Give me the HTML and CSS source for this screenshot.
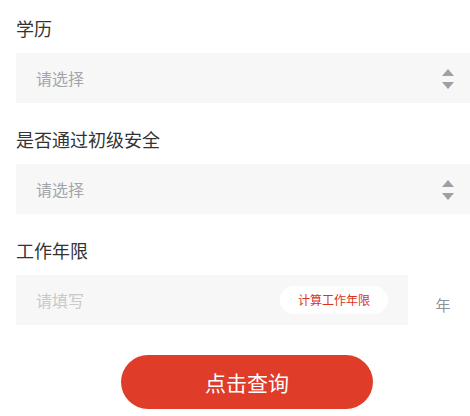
FILE: index.html
```html
<!DOCTYPE html>
<html lang="zh-CN">
<head>
<meta charset="utf-8">
<title>查询</title>
<link rel="stylesheet" href="styles.css">
</head>
<body>
<div class="page">
  <div class="field">
    <div class="label">学历</div>
    <div class="select">
      <span class="placeholder">请选择</span>
      <span class="arrows"><span class="up"></span><span class="down"></span></span>
    </div>
  </div>
  <div class="field">
    <div class="label">是否通过初级安全</div>
    <div class="select">
      <span class="placeholder">请选择</span>
      <span class="arrows"><span class="up"></span><span class="down"></span></span>
    </div>
  </div>
  <div class="field">
    <div class="label">工作年限</div>
    <div class="input-row">
      <div class="input">
        <span class="placeholder light">请填写</span>
        <span class="calc">计算工作年限</span>
      </div>
      <div class="unit">年</div>
    </div>
  </div>
  <div class="actions">
    <button class="submit">点击查询</button>
  </div>
</div>
</body>
</html>
```

FILE: styles.css
```css
html, body {
  margin: 0;
  padding: 0;
  background: #fff;
  overflow: hidden;
}
body {
  font-family: "Noto Sans CJK SC", "Noto Sans", sans-serif;
  color: #333;
}
.page {
  width: 462px;
  padding: 18px 0 0 16px;
}
.field {
  margin-bottom: 26px;
}
.label {
  font-size: 18px;
  line-height: 20px;
  color: #333;
  margin-bottom: 15px;
}
.select, .input {
  height: 50px;
  background: #f7f7f7;
  display: flex;
  align-items: center;
  padding: 0 20px;
  box-sizing: border-box;
}
.select {
  justify-content: space-between;
  padding-right: 24px;
}
.placeholder {
  font-size: 16px;
  color: #a1a6ab;
}
.placeholder.light {
  color: #c9c9c9;
}
.arrows {
  display: flex;
  flex-direction: column;
  gap: 6px;
  margin-top: 1px;
}
.up, .down {
  width: 0;
  height: 0;
  border-left: 6px solid transparent;
  border-right: 6px solid transparent;
}
.up {
  border-bottom: 7px solid #9ba1a8;
}
.down {
  border-top: 7px solid #9ba1a8;
}
.input-row {
  display: flex;
  align-items: center;
}
.input {
  width: 392px;
  justify-content: space-between;
}
.calc {
  height: 28px;
  line-height: 28px;
  padding: 0 18px;
  border-radius: 14px;
  background: #fff;
  color: #d8341f;
  font-size: 12px;
}
.unit {
  flex: 1;
  text-align: center;
  font-size: 15px;
  color: #8c9298;
  margin-top: 8px;
}
.actions {
  display: flex;
  justify-content: center;
  margin-top: 30px;
}
.field:last-of-type {
  margin-bottom: 0;
}
.submit {
  width: 252px;
  height: 54px;
  border: none;
  border-radius: 27px;
  background: #e03c2a;
  color: #fff;
  font-family: "Noto Sans CJK SC", "Noto Sans", sans-serif;
  font-size: 21px;
  padding: 0;
}
```
